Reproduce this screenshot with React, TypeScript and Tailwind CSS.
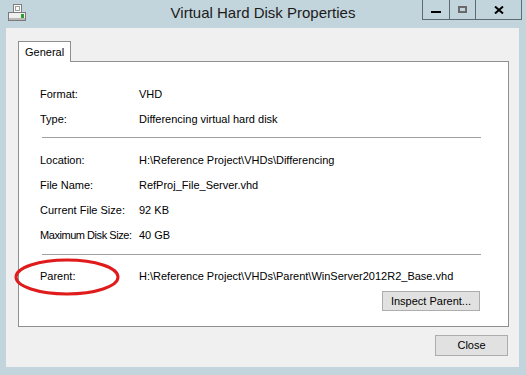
import React from 'react';

function DiskIcon() {
  return (
    <svg width="20" height="20" viewBox="0 0 20 20">
      {/* page */}
      <rect x="5.5" y="1.5" width="8" height="9" fill="#fbfbfb" stroke="#7d7d7d" />
      <rect x="7.5" y="3.5" width="4" height="4" fill="none" stroke="#a0a0a0" />
      {/* drive */}
      <rect x="0.5" y="9.5" width="17" height="8" fill="#efefef" stroke="#7a7a7a" />
      <rect x="1" y="15" width="16" height="2" fill="#b8b8b8" />
      <rect x="13" y="11" width="3" height="4" fill="#2da12d" />
    </svg>
  );
}

function Row({ label, value, tight }: { label: string; value: string; tight?: boolean }) {
  return (
    <div className="grid h-[25px] grid-cols-[99px_1fr] items-center whitespace-nowrap">
      <span className={tight ? 'tracking-[-0.45px]' : ''}>{label}</span>
      <span>{value}</span>
    </div>
  );
}

export default function App() {
  return (
    <div className="flex h-[375px] w-[526px] flex-col overflow-hidden bg-[#c3d5dc] font-['Liberation_Sans',Arial,sans-serif] text-[11px] text-black">
      {/* Title bar */}
      <div className="grid h-[28px] grid-cols-[104px_1fr_104px]">
        <div className="pl-[8px] pt-[3px]">
          <DiskIcon />
        </div>
        <div className="flex items-center justify-center pb-[1px] text-[15px] text-[#1b1b1b]">
          Virtual Hard Disk Properties
        </div>
        <div className="flex items-start">
          <div className="flex h-[20px] border border-t-0 border-[#5d6b71]">
            <div className="flex w-[26px] justify-center pt-[11px]">
              <div className="h-[2px] w-[10px] bg-black" />
            </div>
            <div className="flex w-[26px] justify-center border-l border-[#5d6b71] pt-[6px]">
              <div className="h-[7px] w-[9px] border-2 border-[#6a6a6a]" />
            </div>
            <div className="flex w-[46px] justify-center border-l border-[#5d6b71] pt-[6px]">
              <svg width="10" height="8" viewBox="0 0 10 8">
                <path d="M1 0.5 L9 7.5 M9 0.5 L1 7.5" stroke="#000" strokeWidth="2" />
              </svg>
            </div>
          </div>
        </div>
      </div>

      {/* Client area */}
      <div className="mb-[8px] ml-[6px] mr-[7px] flex flex-1 flex-col bg-[#f0f0f0] pl-[12px] pr-[10px] pt-[13px]">
        <div className="flex">
          <div className="relative z-10 -mb-px flex h-[21px] w-[53px] items-center border border-b-0 border-[#8e8f8f] bg-white pl-[6px]">
            General
          </div>
        </div>

        <div className="relative h-[266px] border border-[#8e8f8f] bg-white pl-[21px] pt-[20px]">
          <Row label="Format:" value="VHD" />
          <Row label="Type:" value="Differencing virtual hard disk" />
          <div className="mb-[10px] ml-[2px] mr-[27px] mt-[5px] h-px bg-[#a0a0a0]" />
          <Row label="Location:" value="H:\Reference Project\VHDs\Differencing" />
          <Row label="File Name:" value="RefProj_File_Server.vhd" />
          <Row label="Current File Size:" value="92 KB" />
          <Row label="Maximum Disk Size:" value="40 GB" tight />
          <div className="mb-[9px] ml-[2px] mr-[27px] mt-[6px] h-px bg-[#a0a0a0]" />
          <Row label="Parent:" value="H:\Reference Project\VHDs\Parent\WinServer2012R2_Base.vhd" />
          <div className="mr-[28px] mt-[2px] flex justify-end">
            <button className="h-[20px] w-[98px] border border-[#adadad] bg-[#e1e1e1] text-[11px]">
              Inspect Parent...
            </button>
          </div>

          {/* red highlight */}
          <svg className="absolute left-[-5px] top-[196px]" width="106" height="38" viewBox="0 0 106 38">
            <ellipse cx="53" cy="19" rx="51" ry="17" fill="none" stroke="#e01b1b" strokeWidth="3" />
          </svg>
        </div>

        <div className="mt-[8px] flex justify-end pr-px">
          <button className="h-[21px] w-[73px] border border-[#adadad] bg-[#e1e1e1] text-[11px]">
            Close
          </button>
        </div>
      </div>
    </div>
  );
}
